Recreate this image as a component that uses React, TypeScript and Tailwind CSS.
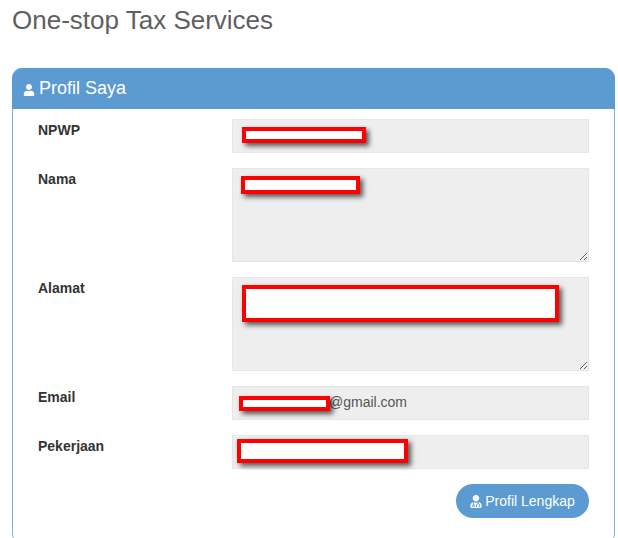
import { FaUser, FaUserMd } from 'react-icons/fa'

function Redact({ className }: { className: string }) {
  return <div className={`absolute bg-white border-[4px] border-[#ff0000] shadow-[3px_3px_5px_rgba(0,0,0,0.65)] ${className}`} aria-hidden />
}

function Row({ label, children }: { label: string; children: React.ReactNode }) {
  return (
    <div className="flex mb-[15px]">
      <label className="w-[194px] pt-[1px] text-[14px] leading-[20px] font-bold text-[#333]">{label}</label>
      <div className="relative w-[357px]">{children}</div>
    </div>
  )
}

const fieldClass = 'block w-full h-[34px] bg-[#eee] border border-[#e6e6e6] px-3 py-[5px] text-[14px] leading-[20px] text-[#555]'
const areaClass = 'block w-full h-[94px] bg-[#eee] border border-[#e6e6e6] px-3 py-[6px] text-[14px] leading-[20px] text-[#555] outline-none'

export default function App() {
  return (
    <div className="h-[538px] w-[618px] overflow-hidden bg-white px-3 font-['Liberation_Sans',Arial,sans-serif]">
      <h1 className="h-[68px] pt-[3px] text-[26px] leading-[34px] font-normal text-[#5f5f5f]">One-stop Tax Services</h1>
      <section className="w-[603px] h-[476px] rounded-[10px] border border-[#7fb0dc]">
        <div className="-mx-px -mt-px h-[41px] flex items-center rounded-t-[10px] bg-[#5b9bd1] pl-[11px] text-[18px] text-white">
          <FaUser className="mr-[4px] mt-[3px] h-[12px] w-[12px]" />
          Profil Saya
        </div>
        <div className="pl-[25px] pt-[10px]">
          <Row label="NPWP">
            <div className={fieldClass} />
            <Redact className="left-[10px] top-[8px] w-[124px] h-[16px]" />
          </Row>
          <Row label="Nama">
            <textarea readOnly className={areaClass} />
            <Redact className="left-[9px] top-[8px] w-[119px] h-[18px]" />
          </Row>
          <Row label="Alamat">
            <textarea readOnly className={areaClass} />
            <Redact className="left-[10px] top-[8px] w-[317px] h-[37px]" />
          </Row>
          <Row label="Email">
            <div className={`${fieldClass} pl-[96px]`}>@gmail.com</div>
            <Redact className="left-[7px] top-[10px] w-[91px] h-[15px]" />
          </Row>
          <Row label="Pekerjaan">
            <div className={fieldClass} />
            <Redact className="left-[5px] top-[4px] w-[171px] h-[24px]" />
          </Row>
          <div className="flex w-[551px] justify-end">
            <button className="flex h-[34px] w-[133px] items-center justify-center rounded-[17px] bg-[#5b9bd1] text-[14px] text-white">
              <FaUserMd className="mr-[3px] h-[13px] w-[12px]" />
              Profil Lengkap
            </button>
          </div>
        </div>
      </section>
    </div>
  )
}
